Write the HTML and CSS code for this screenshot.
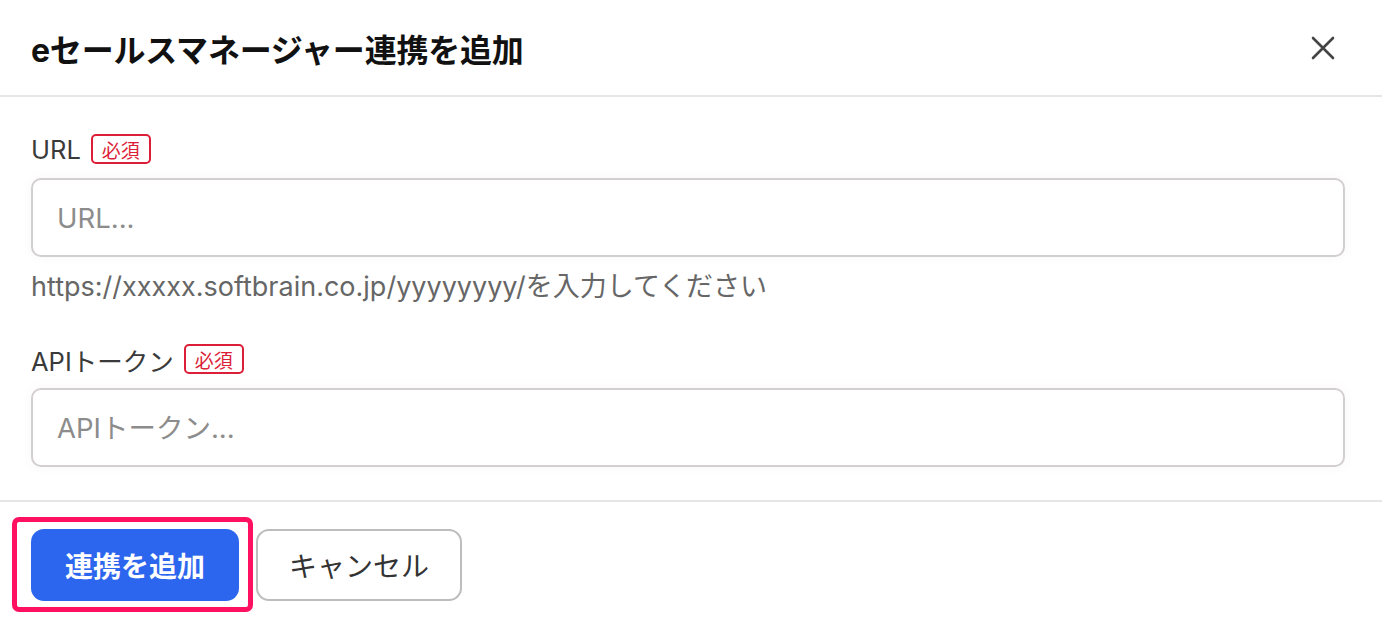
FILE: index.html
```html
<!DOCTYPE html>
<html lang="ja">
<head>
  <meta charset="UTF-8" />
  <meta name="viewport" content="width=device-width, initial-scale=1.0"/>
  <title>eセールスマネージャー連携を追加</title>
  <link rel="stylesheet" href="styles.css">
</head>
<body>
  <div class="dialog">
    <div class="dialog-header">
      <h2 class="dialog-title">eセールスマネージャー連携を追加</h2>
      <button class="close-btn" aria-label="閉じる">
        <svg width="24" height="24" viewBox="0 0 24 24">
          <path d="M2 2 L22 22 M22 2 L2 22" stroke="#444" stroke-width="2.6" stroke-linecap="round" fill="none"/>
        </svg>
      </button>
    </div>

    <div class="dialog-body">
      <div class="field">
        <label class="field-label">URL <span class="required">必須</span></label>
        <input type="text" class="field-input" placeholder="URL...">
        <p class="field-help">https://xxxxx.softbrain.co.jp/yyyyyyyy/を入力してください</p>
      </div>

      <div class="field">
        <label class="field-label">APIトークン <span class="required">必須</span></label>
        <input type="text" class="field-input" placeholder="APIトークン...">
      </div>
    </div>

    <div class="dialog-footer">
      <div class="primary-wrap">
        <button class="btn btn-primary">連携を追加</button>
        <span class="highlight"></span>
      </div>
      <button class="btn btn-secondary">キャンセル</button>
    </div>
  </div>
</body>
</html>
```

FILE: styles.css
```css
body {
  margin: 0;
  background: #fff;
  font-family: Inter, "Noto Sans CJK JP", sans-serif;
  color: #333;
}

.dialog {
  width: 1382px;
  height: 626px;
  overflow: hidden;
}

.dialog-header {
  height: 95px;
  display: flex;
  align-items: center;
  justify-content: space-between;
  padding: 0 47px 0 31px;
  border-bottom: 2px solid #e6e6e6;
}

.dialog-title {
  margin: 0;
  font-size: 32px;
  font-weight: 700;
  color: #111;
  letter-spacing: -0.2px;
}

.close-btn {
  background: none;
  border: none;
  padding: 0;
  width: 24px;
  height: 24px;
  cursor: pointer;
  display: flex;
}

.dialog-body {
  padding: 37px 37px 33px 31px;
  display: flex;
  flex-direction: column;
  gap: 39px;
  border-bottom: 2px solid #e6e6e6;
}

.field {
  display: flex;
  flex-direction: column;
}

.field-label {
  display: flex;
  align-items: center;
  gap: 10px;
  height: 30px;
  font-size: 25.5px;
  color: #3a3a3a;
  margin-bottom: 14px;
}

.required {
  display: inline-flex;
  align-items: center;
  justify-content: center;
  width: 56px;
  height: 26px;
  border: 2px solid #dc1e38;
  border-radius: 5px;
  color: #dc1e38;
  font-size: 19px;
  font-family: "Noto Sans CJK JP", sans-serif;
}

.field-input {
  box-sizing: border-box;
  width: 100%;
  height: 79px;
  border: 2px solid #d3cfcf;
  border-radius: 10px;
  padding: 0 24px;
  font-family: Inter, "Noto Sans CJK JP", sans-serif;
  font-size: 27.5px;
  color: #333;
  background: #fff;
  box-shadow: 0 0 14px rgba(0, 0, 0, 0.035);
  outline: none;
}

.field-input::placeholder {
  color: #8c8c8c;
}

.field-help {
  margin: 12px 0 0;
  font-size: 27px;
  line-height: 36px;
  color: #666;
}

.dialog-footer {
  display: flex;
  align-items: center;
  gap: 17px;
  padding: 27px 31px;
}

.primary-wrap {
  position: relative;
  display: flex;
}

.btn {
  height: 72px;
  border-radius: 13px;
  font-family: "Noto Sans CJK JP", sans-serif;
  font-size: 28px;
  cursor: pointer;
}

.btn-primary {
  width: 208px;
  border: none;
  background: #2d66ee;
  color: #fff;
  font-weight: 700;
}

.btn-secondary {
  width: 206px;
  background: #fff;
  border: 2px solid #bdbdbd;
  color: #333;
}

.highlight {
  position: absolute;
  left: -19px;
  top: -12px;
  right: -14px;
  bottom: -11px;
  border: 5px solid #ff1060;
  border-radius: 7px;
  pointer-events: none;
}
```
